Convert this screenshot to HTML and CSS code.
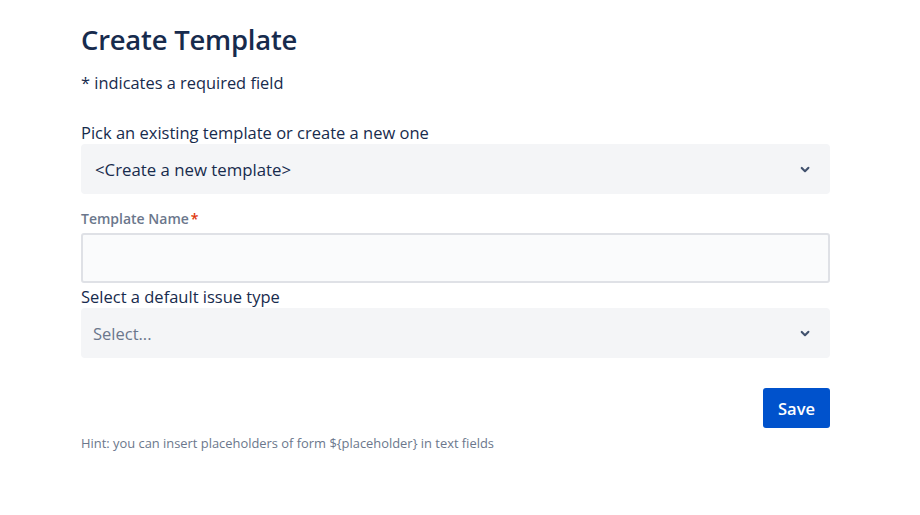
FILE: index.html
```html
<!DOCTYPE html>
<html>
<head>
<meta charset="utf-8">
<link rel="stylesheet" href="styles.css">
</head>
<body>
<main class="page">
  <h1 class="title">Create Template</h1>
  <p class="required-note">* indicates a required field</p>
  <form class="form">
    <div class="field field-pick">
      <label class="label-plain">Pick an existing template or create a new one</label>
      <div class="select">
        <span class="select-value">&lt;Create a new template&gt;</span>
        <svg class="chevron" width="24" height="24" viewBox="0 0 24 24"><path d="M8.3 10.3a1 1 0 0 1 1.4 0L12 12.6l2.3-2.3a1 1 0 1 1 1.4 1.4l-3 3a1 1 0 0 1-1.4 0l-3-3a1 1 0 0 1 0-1.4z" fill="#42526e"/></svg>
      </div>
    </div>
    <div class="field field-name">
      <label class="label-strong">Template Name<span class="star">*</span></label>
      <div class="input"></div>
    </div>
    <div class="field field-type">
      <label class="label-plain">Select a default issue type</label>
      <div class="select">
        <span class="select-placeholder">Select...</span>
        <svg class="chevron" width="24" height="24" viewBox="0 0 24 24"><path d="M8.3 10.3a1 1 0 0 1 1.4 0L12 12.6l2.3-2.3a1 1 0 1 1 1.4 1.4l-3 3a1 1 0 0 1-1.4 0l-3-3a1 1 0 0 1 0-1.4z" fill="#42526e"/></svg>
      </div>
    </div>
    <div class="actions">
      <button type="button" class="btn-primary">Save</button>
    </div>
  </form>
  <p class="hint">Hint: you can insert placeholders of form ${placeholder} in text fields</p>
</main>
</body>
</html>
```
FILE: styles.css
```css
* { box-sizing: border-box; }
html, body { margin: 0; padding: 0; background: #fff; }
body {
  font-family: "Open Sans", "Noto Sans", sans-serif;
  color: #172b4d;
}
.page {
  width: 749px;
  margin-left: 81px;
  padding-top: 22px;
}
.title {
  margin: 0;
  font-size: 27.4px;
  font-weight: 600;
  line-height: 36px;
  color: #172b4d;
  letter-spacing: -0.2px;
}
.required-note {
  margin: 13px 0 0;
  font-size: 16.4px;
  line-height: 24px;
  color: #172b4d;
}
.form { margin-top: 27px; }
.field { display: flex; flex-direction: column; }
.label-plain {
  font-size: 16.5px;
  line-height: 22px;
  color: #172b4d;
}
.select {
  height: 50px;
  background: #f4f5f7;
  border-radius: 4px;
  display: flex;
  align-items: center;
  justify-content: space-between;
  padding: 0 12px 0 14px;
}
.select-value { font-size: 16.8px; color: #172b4d; }
.select-placeholder { font-size: 16.5px; color: #6b778c; margin-left: -2px; }
.chevron { display: block; width: 26px; height: 26px; }
.field-name { margin-top: 17px; }
.label-strong {
  font-size: 14px;
  font-weight: 600;
  line-height: 16px;
  color: #6b778c;
  margin-bottom: 6px;
}
.star { color: #de350b; margin-left: 2px; }
.input {
  height: 50px;
  background: #fafbfc;
  border: 2px solid #dfe1e6;
  border-radius: 3px;
}
.field-type { margin-top: 3px; }
.actions {
  display: flex;
  justify-content: flex-end;
  margin-top: 30px;
}
.btn-primary {
  width: 67px;
  height: 40px;
  border: 0;
  border-radius: 3px;
  background: #0052cc;
  color: #fff;
  font-family: inherit;
  font-size: 16.5px;
  font-weight: 600;
  padding: 0;
}
.hint {
  margin: 7px 0 0;
  font-size: 12.9px;
  line-height: 16px;
  color: #6b778c;
}
```
